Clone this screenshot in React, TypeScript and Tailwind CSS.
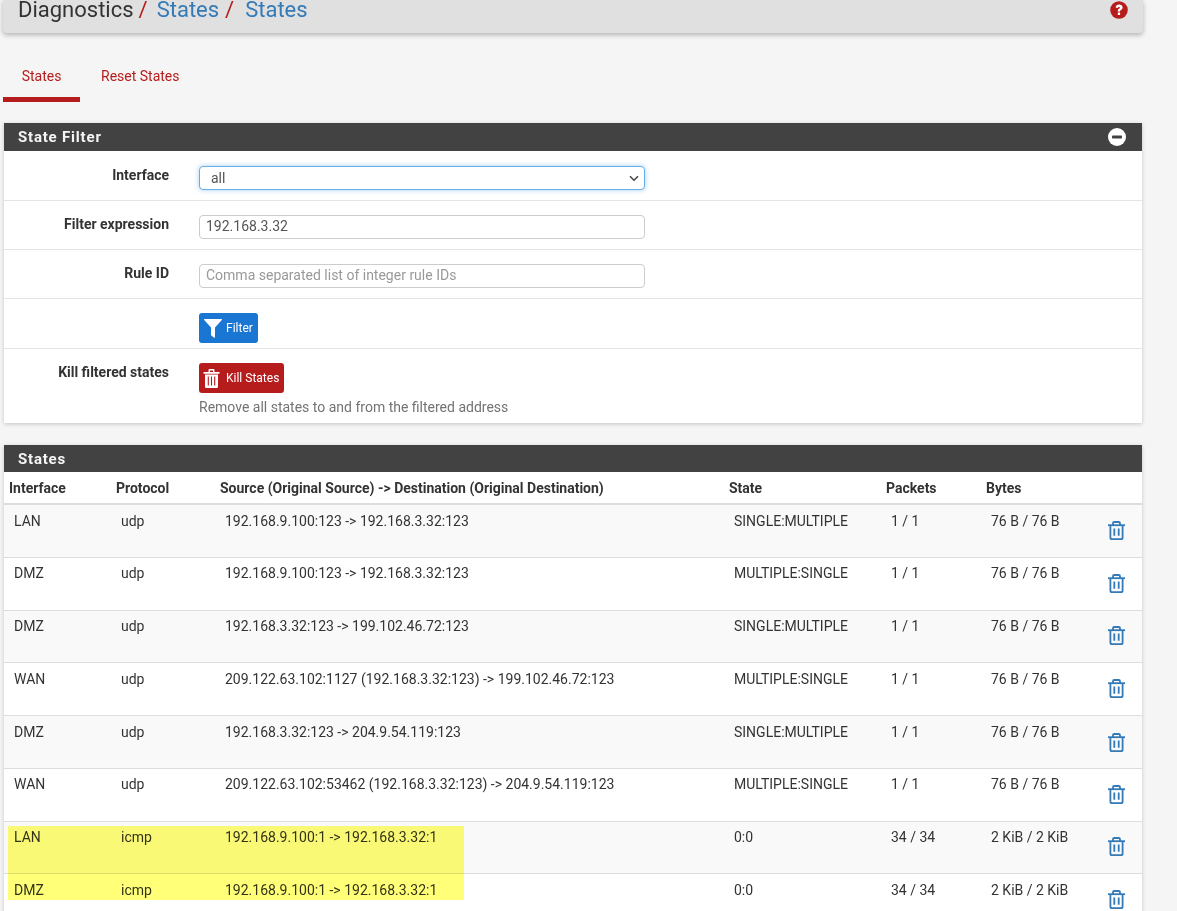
const rows = [
  ["LAN", "udp", "192.168.9.100:123 -> 192.168.3.32:123", "SINGLE:MULTIPLE", "1 / 1", "76 B / 76 B", "h-[53px] pt-[7px]", "pt-[9px]"],
  ["DMZ", "udp", "192.168.9.100:123 -> 192.168.3.32:123", "MULTIPLE:SINGLE", "1 / 1", "76 B / 76 B", "h-[53px] pt-[6px]", "pt-[10px]"],
  ["DMZ", "udp", "192.168.3.32:123 -> 199.102.46.72:123", "SINGLE:MULTIPLE", "1 / 1", "76 B / 76 B", "h-[52px] pt-[6px]", "pt-[9px]"],
  ["WAN", "udp", "209.122.63.102:1127 (192.168.3.32:123) -> 199.102.46.72:123", "MULTIPLE:SINGLE", "1 / 1", "76 B / 76 B", "h-[53px] pt-[7px]", "pt-[9px]"],
  ["DMZ", "udp", "192.168.3.32:123 -> 204.9.54.119:123", "SINGLE:MULTIPLE", "1 / 1", "76 B / 76 B", "h-[53px] pt-[7px]", "pt-[10px]"],
  ["WAN", "udp", "209.122.63.102:53462 (192.168.3.32:123) -> 204.9.54.119:123", "MULTIPLE:SINGLE", "1 / 1", "76 B / 76 B", "h-[53px] pt-[6px]", "pt-[10px]"],
  ["LAN", "icmp", "192.168.9.100:1 -> 192.168.3.32:1", "0:0", "34 / 34", "2 KiB / 2 KiB", "h-[52px] pt-[6px]", "pt-[9px]"],
  ["DMZ", "icmp", "192.168.9.100:1 -> 192.168.3.32:1", "0:0", "34 / 34", "2 KiB / 2 KiB", "h-[53px] pt-[7px]", "pt-[9px]"],
];

const columns = "grid grid-cols-[107px_104px_509px_157px_100px_117px_1fr]";

function TrashOutline() {
  return (
    <svg width="17" height="19" viewBox="0 0 17 19" fill="none" stroke="#337ab7" strokeWidth="1.8">
      <path d="M0 4.2h17" />
      <path d="M5 4V2.2C5 1.4 5.6 1 6.2 1h4.6c.6 0 1.2.4 1.2 1.2V4" />
      <path d="M2.4 4.2V16.4c0 1 .7 1.7 1.6 1.7h9c.9 0 1.6-.7 1.6-1.7V4.2" />
      <path d="M6.3 7.4v7.4M10.7 7.4v7.4" />
    </svg>
  );
}

function FormRow({ label, children, className, labelPad = "pt-[14px]", bodyPad = "pt-[14px]" }: { label?: string; children: React.ReactNode; className: string; labelPad?: string; bodyPad?: string }) {
  return (
    <div className={`flex border-b border-[#e4e4e4] last:border-b-0 ${className}`}>
      <div className={`w-[165px] shrink-0 text-right text-[14px] leading-[18px] font-bold text-[#333] ${labelPad}`}>{label}</div>
      <div className={`ml-[30px] w-[446px] ${bodyPad}`}>{children}</div>
    </div>
  );
}

export default function App() {
  return (
    <div className="relative h-[911px] w-[1177px] overflow-hidden bg-[#f5f5f5] font-['Roboto',sans-serif] text-[14px] text-[#333]">
      <header className="ml-[3px] flex h-[33px] w-[1140px] items-start justify-between rounded-b-[4px] bg-[#e0e0e0] pl-[15px] pr-[15px] shadow-[0_2px_5px_rgba(0,0,0,0.28)]">
        <div className="-mt-[5px] flex text-[22px] leading-[30px]">
          <span className="text-[#333]">Diagnostics</span>
          <span className="ml-[5px] text-[#b71c1c]">/</span>
          <span className="ml-[9px] text-[#337ab7]">States</span>
          <span className="ml-[6px] text-[#b71c1c]">/</span>
          <span className="ml-[11px] text-[#337ab7]">States</span>
        </div>
        <svg className="mt-[1px]" width="18" height="18" viewBox="0 0 18 18">
          <circle cx="9" cy="9" r="8.8" fill="#b71c1c" />
          <path d="M5.6 6.6c.2-2 1.7-3 3.5-3 2 0 3.5 1.2 3.5 2.9 0 1.3-.8 2-1.6 2.5-.7.4-.9.6-.9 1.1v.4H7.8v-.6c0-1.1.5-1.6 1.2-2.1.6-.4 1-.6 1-1.1 0-.5-.4-.8-1-.8-.7 0-1 .4-1.2 1.1zM7.8 11.6h2.3v2.4H7.8z" fill="#fff" />
        </svg>
      </header>

      <nav className="mt-[27px] flex h-[42px] text-[14px] leading-[33px] text-[#b71c1c]">
        <div className="ml-[3px] h-[42px] w-[77px] border-b-[5px] border-[#b71c1c] text-center">States</div>
        <div className="ml-[21px]">Reset States</div>
      </nav>

      <section className="mt-[21px] ml-[4px] w-[1138px] bg-white shadow-[0_1px_4px_rgba(0,0,0,0.2)]">
        <div className="flex h-[28px] items-center justify-between bg-[#424242] pl-[14px] pr-[16px] text-[15px] font-bold tracking-[0.8px] text-[#f5f5f5]">
          <span>State Filter</span>
          <svg width="18" height="18" viewBox="0 0 18 18">
            <circle cx="9" cy="9" r="9" fill="#fff" />
            <rect x="4" y="7.6" width="10" height="2.8" rx="0.6" fill="#424242" />
          </svg>
        </div>
        <FormRow label="Interface" className="h-[50px]" labelPad="pt-[15px]" bodyPad="pt-[15px]">
          <div className="flex h-[24px] items-center justify-between rounded-[4px] border border-[#66afe9] bg-white pl-[11px] pr-[5px] text-[14px] text-[#555] shadow-[0_0_5px_rgba(102,175,233,0.6)]">
            <span>all</span>
            <svg width="10" height="7" viewBox="0 0 10 7" fill="none" stroke="#444" strokeWidth="1.5"><path d="M1 1.2l4 4 4-4" /></svg>
          </div>
        </FormRow>
        <FormRow label="Filter expression" className="h-[49px]">
          <div className="h-[24px] rounded-[4px] border border-[#ccc] bg-white pl-[6px] text-[14px] leading-[20px] text-[#555]">192.168.3.32</div>
        </FormRow>
        <FormRow label="Rule ID" className="h-[49px]">
          <div className="h-[24px] rounded-[4px] border border-[#ccc] bg-white pl-[6px] text-[14px] leading-[20px] text-[#999]">Comma separated list of integer rule IDs</div>
        </FormRow>
        <FormRow className="h-[50px]">
          <div className="flex h-[30px] w-[59px] items-center rounded-[3px] bg-[#1976d2] pl-[5px] text-[12px] text-white">
            <svg width="18" height="19" viewBox="0 0 18 19" fill="#fff"><path d="M.6 0h16.8c.6 0 .8.7.4 1.1L11 8.6V18c0 .7-.7 1-1.2.6L7.3 16.4c-.2-.2-.3-.4-.3-.7V8.6L.2 1.1C-.2.7 0 0 .6 0z" /></svg>
            <span className="ml-[4px]">Filter</span>
          </div>
        </FormRow>
        <FormRow label="Kill filtered states" className="h-[74px]">
          <div className="flex h-[30px] w-[85px] items-center rounded-[3px] bg-[#b71c1c] pl-[4px] text-[12px] text-white">
            <svg width="17" height="19" viewBox="0 0 16 19"><path fill="#fff" d="M0 3h16v1.8H0zM5 3V1.2C5 .5 5.5 0 6.2 0h3.6c.7 0 1.2.5 1.2 1.2V3H9.6V1.4H6.4V3zM1.5 5.4h13V17.4c0 .9-.7 1.6-1.6 1.6H3.1c-.9 0-1.6-.7-1.6-1.6z" /><path stroke="#b71c1c" strokeWidth="1.1" d="M4.8 7.5v9M8 7.5v9M11.2 7.5v9" /></svg>
            <span className="ml-[6px]">Kill States</span>
          </div>
          <p className="mt-[5px] w-[400px] text-[14px] leading-[18px] text-[#737373]">Remove all states to and from the filtered address</p>
        </FormRow>
      </section>

      <section className="mt-[22px] ml-[4px] w-[1138px] bg-white shadow-[0_1px_4px_rgba(0,0,0,0.2)]">
        <div className="flex h-[27px] items-center bg-[#424242] pl-[14px] pt-[1px] text-[15px] font-bold tracking-[0.8px] text-[#f5f5f5]">States</div>
        <div className={`${columns} h-[33px] border-b-2 border-[#ddd] pt-[8px] text-[14px] leading-[16px] font-bold`}>
          <div className="pl-[5px]">Interface</div>
          <div className="pl-[5px]">Protocol</div>
          <div className="pl-[5px] whitespace-nowrap">Source (Original Source) -&gt; Destination (Original Destination)</div>
          <div className="pl-[5px]">State</div>
          <div className="pl-[5px]">Packets</div>
          <div className="pl-[5px]">Bytes</div>
        </div>
        {rows.map((r, i) => (
          <div key={i} className={`${columns} ${r[6]} border-b border-[#ddd] leading-[18px] ${i % 2 === 0 ? "bg-[#f9f9f9]" : "bg-white"}`}>
            <div className="pl-[10px]">{r[0]}</div>
            <div className="pl-[10px]">{r[1]}</div>
            <div className="pl-[10px] whitespace-nowrap">{r[2]}</div>
            <div className="pl-[10px]">{r[3]}</div>
            <div className="pl-[10px]">{r[4]}</div>
            <div className="pl-[10px]">{r[5]}</div>
            <div className={`pl-[10px] ${r[7]}`}><TrashOutline /></div>
          </div>
        ))}
      </section>

      <div className="absolute top-[826px] left-[8px] h-[74px] w-[456px] bg-[#ffff78] mix-blend-multiply" />
    </div>
  );
}
